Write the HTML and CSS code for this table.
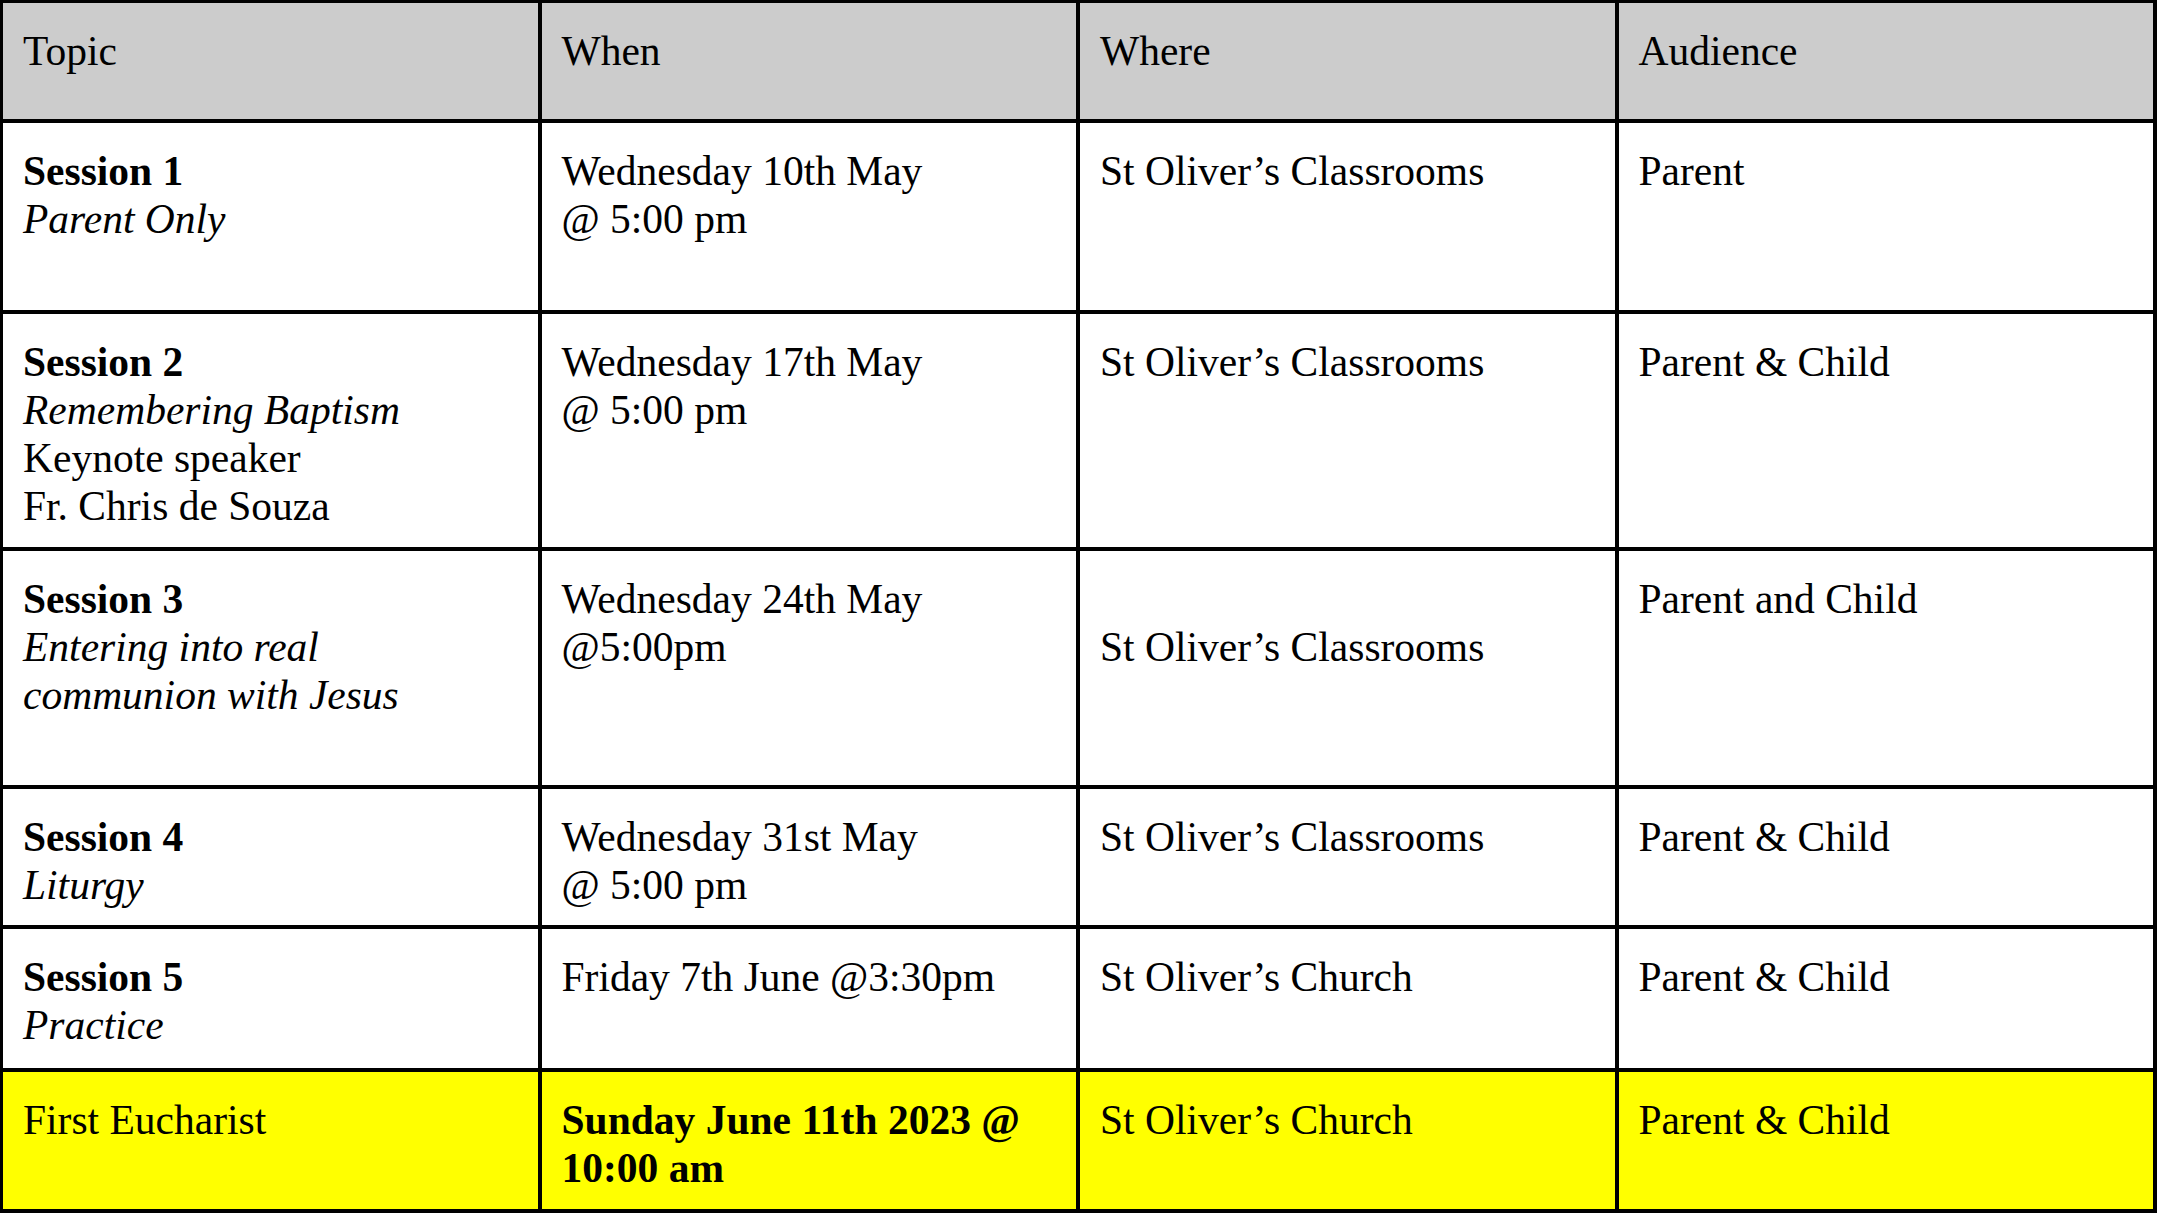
FILE: index.html
```html
<!DOCTYPE html>
<html lang="en">
<head>
<meta charset="utf-8">
<title>First Eucharist Sessions</title>
<link rel="stylesheet" href="styles.css">
</head>
<body>
<table class="schedule">
  <colgroup>
    <col class="col"><col class="col"><col class="col"><col class="col">
  </colgroup>
  <thead>
    <tr class="row-head">
      <th>Topic</th>
      <th>When</th>
      <th>Where</th>
      <th>Audience</th>
    </tr>
  </thead>
  <tbody>
    <tr class="row-1">
      <td><b>Session 1</b><br><i>Parent Only</i></td>
      <td>Wednesday 10th May<br>@ 5:00 pm</td>
      <td>St Oliver’s Classrooms</td>
      <td>Parent</td>
    </tr>
    <tr class="row-2">
      <td><b>Session 2</b><br><i>Remembering Baptism</i><br>Keynote speaker<br>Fr. Chris de Souza</td>
      <td>Wednesday 17th May<br>@ 5:00 pm</td>
      <td>St Oliver’s Classrooms</td>
      <td>Parent &amp; Child</td>
    </tr>
    <tr class="row-3">
      <td><b>Session 3</b><br><i>Entering into real<br>communion with Jesus</i></td>
      <td>Wednesday 24th May<br>@5:00pm</td>
      <td><br>St Oliver’s Classrooms</td>
      <td>Parent and Child</td>
    </tr>
    <tr class="row-4">
      <td><b>Session 4</b><br><i>Liturgy</i></td>
      <td>Wednesday 31st May<br>@ 5:00 pm</td>
      <td>St Oliver’s Classrooms</td>
      <td>Parent &amp; Child</td>
    </tr>
    <tr class="row-5">
      <td><b>Session 5</b><br><i>Practice</i></td>
      <td>Friday 7th June @3:30pm</td>
      <td>St Oliver’s Church</td>
      <td>Parent &amp; Child</td>
    </tr>
    <tr class="row-6 highlight">
      <td>First Eucharist</td>
      <td><b>Sunday June 11th 2023 @ 10:00 am</b></td>
      <td>St Oliver’s Church</td>
      <td>Parent &amp; Child</td>
    </tr>
  </tbody>
</table>
</body>
</html>
```

FILE: styles.css
```css
html, body {
  margin: 0;
  padding: 0;
  background: #ffffff;
  overflow: hidden;
}

.schedule {
  width: 2157px;
  table-layout: fixed;
  border-collapse: separate;
  border-spacing: 0;
  border-top: 3px solid #000;
  border-left: 3px solid #000;
  font-family: "Liberation Serif", "Times New Roman", serif;
  font-size: 41.5px;
  line-height: 48px;
  color: #000;
}

.schedule .col {
  width: 25%;
}

.schedule th,
.schedule td {
  border-right: 4px solid #000;
  border-bottom: 4px solid #000;
  padding: 23.5px 18px 0 20px;
  vertical-align: top;
  text-align: left;
  font-weight: normal;
  overflow: hidden;
}

.schedule b {
  font-weight: bold;
}

.schedule i {
  font-style: italic;
}

.row-head th {
  background: #cccccc;
}

.row-head { height: 120px; }
.row-1 { height: 191px; }
.row-2 { height: 237px; }
.row-3 { height: 238px; }
.row-4 { height: 140px; }
.row-5 { height: 143px; }
.row-6 { height: 141px; }

.highlight td {
  background: #ffff00;
}
```
